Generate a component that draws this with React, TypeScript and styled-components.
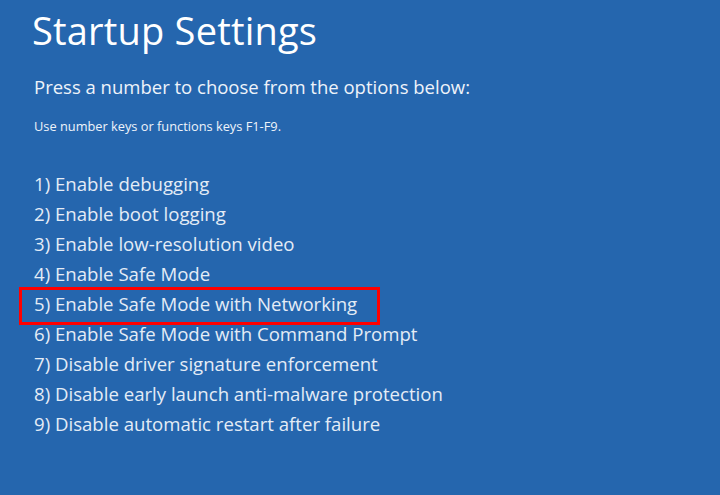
import styled, { createGlobalStyle } from "styled-components";

const GlobalStyle = createGlobalStyle`
  html, body {
    margin: 0;
    padding: 0;
    background: #2566ae;
  }
  body {
    font-family: "Open Sans", "Noto Sans", sans-serif;
  }
`;

const Screen = styled.div`
  width: 720px;
  height: 495px;
  background: #2566ae;
  color: #eef3fa;
  padding: 4px 0 0 32px;
  box-sizing: border-box;
  overflow: hidden;
`;

const Title = styled.h1`
  margin: 0;
  font-size: 38px;
  font-weight: 400;
  line-height: 52px;
  color: #ffffff;
  letter-spacing: 0.2px;
`;

const Prompt = styled.p`
  margin: 18px 0 0 2px;
  font-size: 18.5px;
  line-height: 26px;
  font-weight: 400;
`;

const Hint = styled.p`
  margin: 18px 0 0 2px;
  font-size: 12.8px;
  line-height: 16px;
`;

const Options = styled.ol`
  list-style: none;
  margin: 35px 0 0 0;
  padding: 0;
  display: flex;
  flex-direction: column;
`;

const Option = styled.li<{ $selected?: boolean }>`
  font-size: 18.6px;
  line-height: 30px;
  height: 30px;
  padding-left: 2px;
  color: #e4ecf6;
  position: relative;
  white-space: nowrap;

  ${({ $selected }) =>
    $selected &&
    `
    &::before {
      content: "";
      position: absolute;
      left: -13px;
      top: -2px;
      width: 361px;
      height: 38px;
      box-sizing: border-box;
      border: 3px solid #ff0000;
    }
  `}
`;

const options = [
  "Enable debugging",
  "Enable boot logging",
  "Enable low-resolution video",
  "Enable Safe Mode",
  "Enable Safe Mode with Networking",
  "Enable Safe Mode with Command Prompt",
  "Disable driver signature enforcement",
  "Disable early launch anti-malware protection",
  "Disable automatic restart after failure",
];

export default function App() {
  return (
    <>
      <GlobalStyle />
      <Screen>
        <Title>Startup Settings</Title>
        <Prompt>Press a number to choose from the options below:</Prompt>
        <Hint>Use number keys or functions keys F1-F9.</Hint>
        <Options>
          {options.map((label, i) => (
            <Option key={label} $selected={i === 4}>
              {i + 1}) {label}
            </Option>
          ))}
        </Options>
      </Screen>
    </>
  );
}
